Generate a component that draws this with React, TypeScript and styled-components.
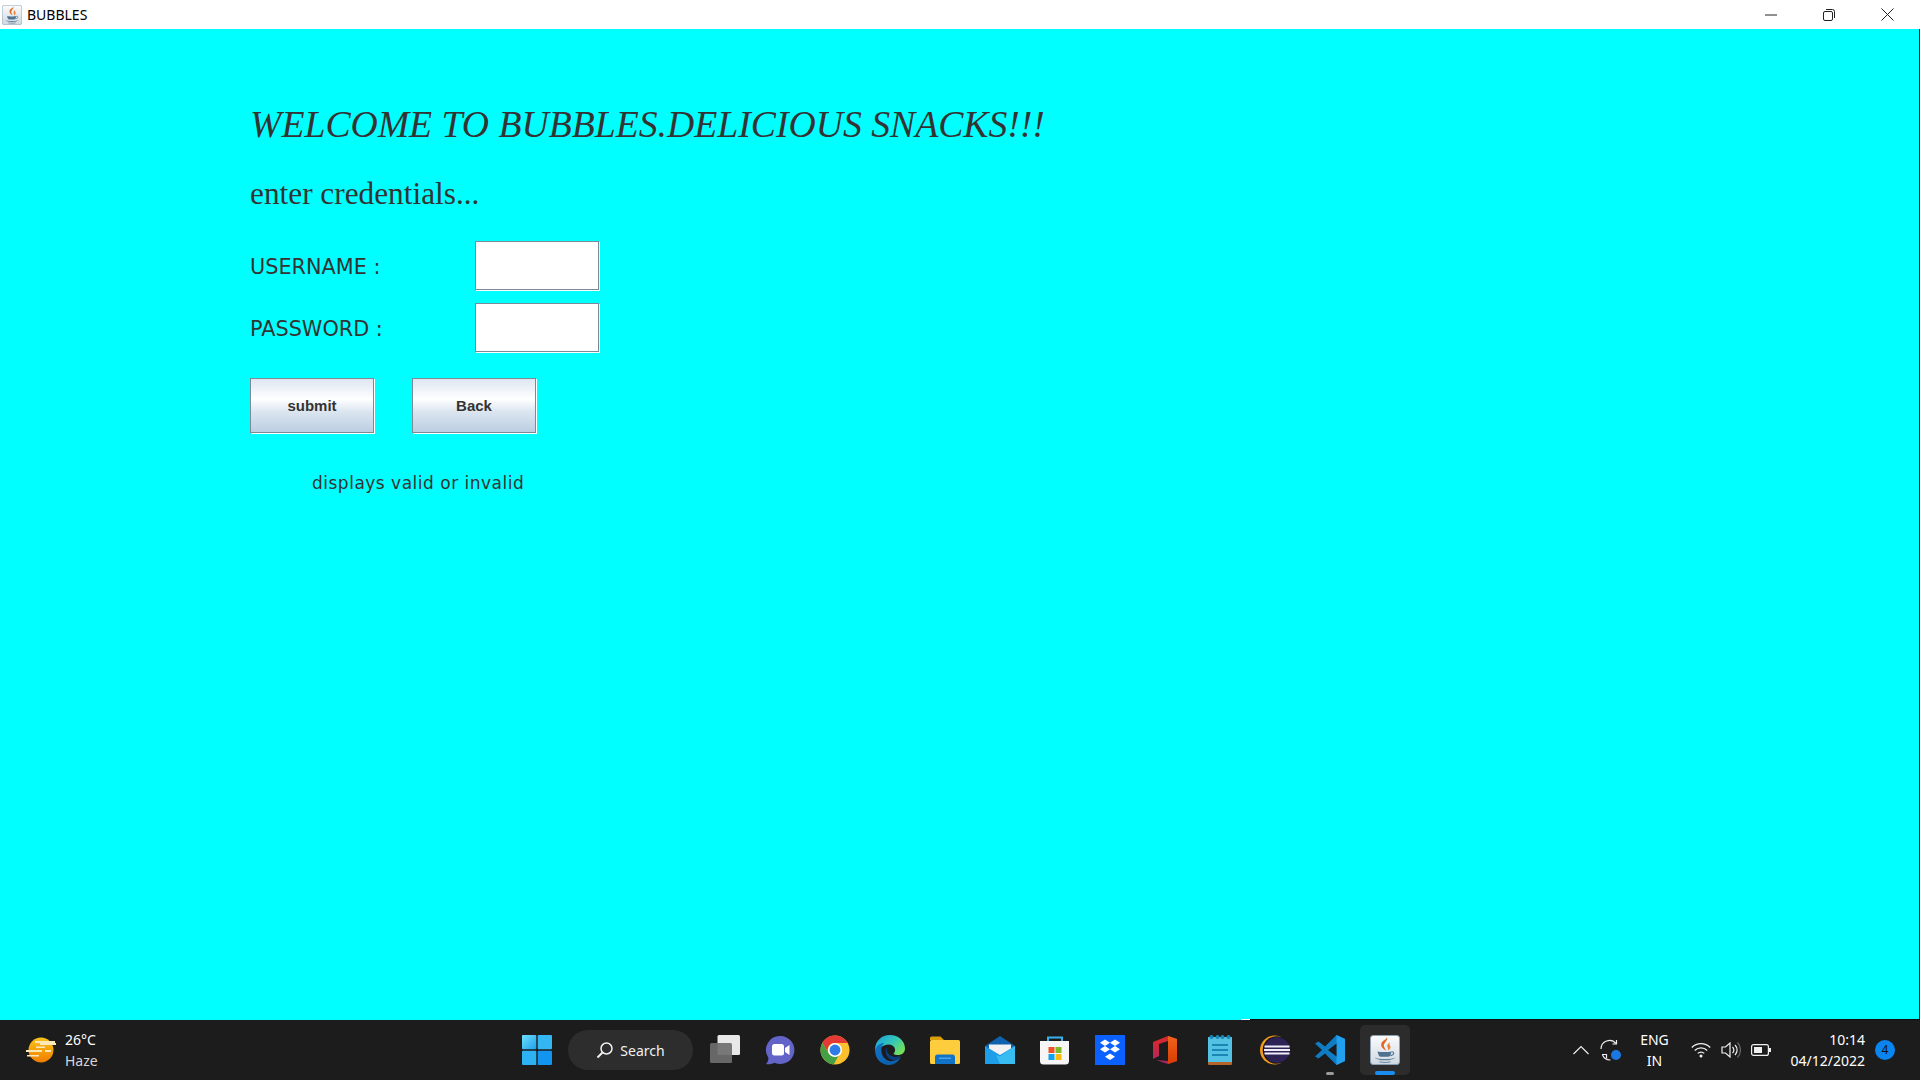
import React from 'react';
import styled, { createGlobalStyle } from 'styled-components';

const GlobalStyle = createGlobalStyle`
  html, body { margin: 0; padding: 0; height: 100%; background: #00ffff; overflow: hidden; }
  #root { height: 100%; }
`;

const Screen = styled.div`
  width: 1920px;
  height: 1080px;
  display: flex;
  flex-direction: column;
`;

const TitleBar = styled.header`
  height: 29px;
  flex: none;
  background: #fff;
  display: flex;
  align-items: center;
  padding-left: 2px;
`;

const TitleText = styled.span`
  margin-left: 5px;
  font: 14px 'Noto Sans', sans-serif;
  color: #000;
`;

const WindowButtons = styled.div`
  margin-left: auto;
  padding-right: 3px;
  display: flex;
`;

const WindowButton = styled.div`
  width: 58.5px;
  height: 29px;
  display: flex;
  align-items: center;
  justify-content: center;
`;

const Content = styled.main`
  flex: 1;
  background: #00ffff;
  border-right: 1px solid #222;
  padding: 73px 0 0 250px;
  color: #333;
`;

const Heading = styled.h1`
  margin: 0;
  height: 44px;
  font: italic 400 37.7px/44px 'Liberation Serif', serif;
  white-space: nowrap;
`;

const SubHeading = styled.h2`
  margin: 30px 0 0;
  height: 36px;
  font: 400 31.3px/36px 'Liberation Serif', serif;
`;

const FormGrid = styled.div`
  margin-top: 29px;
  display: grid;
  grid-template-columns: 225px 124px;
  grid-auto-rows: 49px;
  row-gap: 13px;
  align-items: center;
`;

const FieldLabel = styled.label`
  font: 20.8px/24px 'DejaVu Sans', sans-serif;
  padding-top: 3px;
`;

const TextField = styled.input`
  box-sizing: border-box;
  width: 124px;
  height: 49px;
  background: #fff;
  border: 1px solid #7a8a99;
  box-shadow: 1px 1px 0 #fff;
  padding: 0;
  outline: none;
`;

const ButtonRow = styled.div`
  margin-top: 26px;
  display: flex;
  gap: 38px;
`;

const MetalButton = styled.button`
  box-sizing: border-box;
  width: 124px;
  height: 55px;
  border: 1px solid #7a8a99;
  box-shadow: 1px 1px 0 #fff;
  background: linear-gradient(180deg, #dde6f1 0%, #ffffff 38%, #dbe5f0 62%, #bccee2 100%);
  font: 700 15px 'Liberation Sans', sans-serif;
  color: #333;
  padding: 0;
`;

const StatusText = styled.div`
  margin: 39px 0 0 62px;
  font: 17px/22px 'DejaVu Sans', sans-serif;
  letter-spacing: 0.5px;
`;

const Taskbar = styled.footer`
  position: relative;
  height: 60px;
  flex: none;
  background: #1c1c1c;
  display: flex;
  align-items: center;
  color: #fff;
  font: 14px/21px 'Noto Sans', sans-serif;
`;

const EdgeLine = styled.div<{ $left: number; $width: number; $color: string }>`
  position: absolute;
  top: -1px;
  height: 1px;
  left: ${(p) => p.$left}px;
  width: ${(p) => p.$width}px;
  background: ${(p) => p.$color};
`;

const Weather = styled.div`
  width: 486px;
  flex: none;
  padding-left: 26px;
  display: flex;
  align-items: center;
  gap: 9px;
`;

const WeatherText = styled.div`
  display: flex;
  flex-direction: column;
  margin-top: -1px;
`;

const Muted = styled.span`
  color: #d6d6d6;
`;

const Dock = styled.div`
  display: flex;
  align-items: center;
  gap: 5px;
`;

const DockSlot = styled.div<{ $active?: boolean }>`
  position: relative;
  width: 50px;
  height: 50px;
  border-radius: 5px;
  display: flex;
  align-items: center;
  justify-content: center;
  background: ${(p) => (p.$active ? '#2c2c2c' : 'transparent')};
`;

const RunningDot = styled.div<{ $active?: boolean }>`
  position: absolute;
  bottom: 0;
  left: 50%;
  transform: translateX(-50%);
  width: ${(p) => (p.$active ? 20 : 8)}px;
  height: ${(p) => (p.$active ? 4 : 3)}px;
  border-radius: 2px;
  background: ${(p) => (p.$active ? '#1a8cf0' : '#9a9a9a')};
`;

const SearchPill = styled.div`
  width: 125px;
  height: 40px;
  margin: 0 2px 0 1px;
  border-radius: 20px;
  background: #2d2d2d;
  display: flex;
  align-items: center;
  justify-content: center;
  gap: 6px;
  font-size: 14px;
  color: #f0f0f0;
`;

const Tray = styled.div`
  margin-left: auto;
  padding-right: 25px;
  display: flex;
  align-items: center;
`;

const TraySlot = styled.div<{ $width: number }>`
  width: ${(p) => p.$width}px;
  display: flex;
  align-items: center;
  justify-content: center;
`;

const LangBlock = styled.div`
  text-align: center;
`;

const ClockBlock = styled.div`
  width: 86px;
  text-align: right;
  white-space: nowrap;
  margin-right: 10px;
`;

const Badge = styled.div`
  width: 20px;
  height: 20px;
  border-radius: 50%;
  background: #0a84ee;
  color: #111;
  font-size: 12px;
  line-height: 20px;
  text-align: center;
`;

const JavaIcon = ({ size }: { size: number }) => (
  <svg width={size} height={size} viewBox="0 0 32 32">
    <defs>
      <linearGradient id="javaBg" x1="0" y1="0" x2="0" y2="1">
        <stop offset="0" stopColor="#fbfcfd" />
        <stop offset="1" stopColor="#cfd8e2" />
      </linearGradient>
    </defs>
    <rect x="0.5" y="0.5" width="31" height="31" rx="3" fill="url(#javaBg)" stroke="#8ea2b5" />
    <path d="M18 2.500c2 3.500-4.500 6-3 10 .4 1.200 1.300 2.500 2 4-3-1.500-5.500-4-5-7C12.500 6 17.500 5.500 18 2.500z" fill="#e2691f" />
    <path d="M22 7.500c-3 1.500-4.500 3.500-3 6 .4 1 .6 2 .2 3.200 2.800-1.700 3.500-3.700 2-5.700-.8-1.200-.6-2.400.8-3.500z" fill="#e98436" />
    <path d="M8 17.500c3 1 12 1 15 0-.5 1.200-.8 3.500-1.600 4.500-1 1.200-2.400 1.200-5.900 1.200s-5 0-5.900-1.200C8.800 21 8.500 18.700 8 17.500z" fill="#4f7290" />
    <path d="M23 18c3-.6 3.500 3-1.200 4" fill="none" stroke="#4f7290" strokeWidth="1.200" />
    <path d="M5 24c4 2.200 18 2.200 22 0-3 4-19 4-22 0z" fill="#5f7f99" />
    <path d="M10 28.500c3 .8 9 .8 12 0" fill="none" stroke="#6d8aa2" strokeWidth="1.200" />
  </svg>
);

const SunHaze = () => (
  <svg width="30" height="28" viewBox="0 0 30 28">
    <defs>
      <linearGradient id="sun" x1="0" y1="0" x2="0" y2="1">
        <stop offset="0" stopColor="#fcc419" />
        <stop offset="1" stopColor="#ef7d00" />
      </linearGradient>
    </defs>
    <circle cx="15" cy="14" r="12.500" fill="url(#sun)" />
    <g fill="#fbe7b8">
      <rect x="9" y="5" width="20" height="2" />
      <rect x="14" y="7" width="16" height="2" />
      <rect x="10" y="10.500" width="9" height="1.500" />
      <rect x="0" y="14" width="16" height="2" />
      <rect x="19" y="14" width="6" height="2" />
      <rect x="1" y="19" width="12" height="1.500" />
    </g>
  </svg>
);

const WindowsLogo = () => (
  <svg width="30" height="30" viewBox="0 0 30 30">
    <defs>
      <linearGradient id="winA" x1="0" y1="0" x2="1" y2="1">
        <stop offset="0" stopColor="#6fe0fb" />
        <stop offset="1" stopColor="#1c9fee" />
      </linearGradient>
    </defs>
    <rect x="0" y="0" width="14.300" height="14.300" rx="1" fill="url(#winA)" />
    <rect x="15.700" y="0" width="14.300" height="14.300" rx="1" fill="#34b6f3" />
    <rect x="0" y="15.700" width="14.300" height="14.300" rx="1" fill="#2cb1f2" />
    <rect x="15.700" y="15.700" width="14.300" height="14.300" rx="1" fill="#1195f0" />
  </svg>
);

const SearchGlyph = () => (
  <svg width="18" height="18" viewBox="0 0 18 18" fill="none" stroke="#f0f0f0" strokeWidth="1.500">
    <circle cx="10.500" cy="7.500" r="5.500" />
    <path d="M6.500 11.500L1.500 16.500" strokeWidth="2" />
  </svg>
);

const TaskView = () => (
  <svg width="30" height="30" viewBox="0 0 30 30">
    <rect x="7.500" y="0" width="22.500" height="20" rx="1.500" fill="#e8e8e8" />
    <rect x="0" y="8" width="22" height="20" rx="1.500" fill="#6e6e6e" fillOpacity="0.92" />
  </svg>
);

const ChatIcon = () => (
  <svg width="30" height="30" viewBox="0 0 30 30">
    <path d="M15.500 1a14 14 0 1 1-6 26.700C7 29 3.500 29.500 1 29c1.500-1.500 2.300-3.500 2.500-6A14 14 0 0 1 15.500 1z" fill="#6264c8" />
    <rect x="7" y="9" width="12" height="11.500" rx="2.500" fill="#fff" />
    <path d="M20 13l4.500-3v10L20 17z" fill="#fff" />
  </svg>
);

const ChromeIcon = () => (
  <svg width="30" height="30" viewBox="0 0 32 32">
    <circle cx="16" cy="16" r="15.500" fill="#fbc02d" />
    <path d="M16 .5A15.500 15.500 0 0 0 2.600 8.200L9.200 19.800A7.500 7.500 0 0 1 16 8.500h13.400A15.500 15.500 0 0 0 16 .5z" fill="#e53935" />
    <path d="M2.600 8.200A15.500 15.500 0 0 0 14.500 31.400l6.700-11.600a7.500 7.500 0 0 1-12-0z" fill="#43a047" />
    <circle cx="16" cy="16" r="7.500" fill="#fff" />
    <circle cx="16" cy="16" r="5.800" fill="#2f7be8" />
  </svg>
);

const EdgeIcon = () => (
  <svg width="30" height="30" viewBox="0 0 30 30">
    <defs>
      <linearGradient id="edgeTop" x1="0" y1="0" x2="1" y2="0.700">
        <stop offset="0" stopColor="#1b9de2" />
        <stop offset="0.550" stopColor="#33c6b8" />
        <stop offset="1" stopColor="#76e05a" />
      </linearGradient>
      <linearGradient id="edgeLow" x1="0" y1="0" x2="1" y2="1">
        <stop offset="0" stopColor="#1175c8" />
        <stop offset="1" stopColor="#0c59a4" />
      </linearGradient>
    </defs>
    <path d="M0 15C0 6 6.500 0 15 0c8.500 0 15 6 15 13.500 0 4.500-3.500 6.500-7 6.500-2 0-4-.5-4.500-1.500 3-2 2-9-5-9C8 9.500 5 14 0 15z" fill="url(#edgeTop)" />
    <path d="M0 15c2-5.500 6-7 9.500-7-3 2-3.500 5.500-3 9 .8 6 6.500 10 11 9 3.500-.8 7-2.500 8.500-5-2 6-7 9-12 9C6 30 0 23.500 0 15z" fill="url(#edgeLow)" />
    <path d="M12 12c-2.500 3-1.500 9 3 12 3.500 2 8 1.500 10.500-3.500-2.500 1.500-6 2-9 .5-3.500-1.500-5.500-5-4.500-9z" fill="#0a3f86" />
  </svg>
);

const FolderIcon = () => (
  <svg width="30" height="28" viewBox="0 0 30 28">
    <path d="M0 2a1.500 1.500 0 0 1 1.500-1.500h9L14 4h-14z" fill="#d9a106" />
    <rect x="0" y="4" width="30" height="24" rx="1.500" fill="#fecd3d" />
    <path d="M5 28v-7a2.500 2.500 0 0 1 2.500-2.500h15A2.500 2.500 0 0 1 25 21v7z" fill="#1173c7" />
    <rect x="9" y="21.500" width="12" height="1.500" fill="#49a4e8" />
  </svg>
);

const MailIcon = () => (
  <svg width="30" height="28" viewBox="0 0 30 28">
    <path d="M0 10L15 0l15 10v2H0z" fill="#0f62ad" />
    <path d="M4 8.500h22V15l-11 6L4 15z" fill="#f2f2f2" />
    <path d="M0 10l15 9 15-9v18H0z" fill="#1e9ee8" />
    <path d="M30 10v18H15l-4-9 4 1.500z" fill="#38bdf2" />
  </svg>
);

const StoreIcon = () => (
  <svg width="30" height="30" viewBox="0 0 30 30">
    <path d="M8 7V2.500h14V7" fill="none" stroke="#35b3ea" strokeWidth="2" />
    <path d="M0 6h29v20a3.500 3.500 0 0 1-3.500 3.500h-22A3.500 3.500 0 0 1 0 26z" fill="#f6f6f6" />
    <rect x="8.500" y="12" width="6" height="6" fill="#f05323" />
    <rect x="15.500" y="12" width="6" height="6" fill="#7cb927" />
    <rect x="8.500" y="19" width="6" height="6" fill="#0ea2ef" />
    <rect x="15.500" y="19" width="6" height="6" fill="#fdb90d" />
  </svg>
);

const DropboxIcon = () => (
  <svg width="30" height="30" viewBox="0 0 30 30">
    <rect width="30" height="30" fill="#0b61fe" />
    <g fill="#fff">
      <path d="M10 4.500l5 3.200-5 3.200-5-3.200z" />
      <path d="M20 4.500l5 3.200-5 3.200-5-3.200z" />
      <path d="M10 11l5 3.200-5 3.200-5-3.200z" />
      <path d="M20 11l5 3.200-5 3.200-5-3.200z" />
      <path d="M15 18.500l5 3.200-5 3.200-5-3.200z" />
    </g>
  </svg>
);

const OfficeIcon = () => (
  <svg width="24" height="28" viewBox="0 0 24 28">
    <defs>
      <linearGradient id="officeA" x1="0" y1="0" x2="0.300" y2="1">
        <stop offset="0" stopColor="#e02a20" />
        <stop offset="1" stopColor="#a9256a" />
      </linearGradient>
      <linearGradient id="officeB" x1="0" y1="0" x2="0" y2="1">
        <stop offset="0" stopColor="#f0641e" />
        <stop offset="1" stopColor="#d83b01" />
      </linearGradient>
    </defs>
    <path d="M0 6L15 0l9 3v22l-9 3-12-4 12 1V5L6 8v12l-6 3z" fill="url(#officeA)" />
    <path d="M15 0l9 3v22l-9 3z" fill="url(#officeB)" />
  </svg>
);

const NotepadIcon = () => (
  <svg width="24" height="30" viewBox="0 0 24 30">
    <rect x="0" y="2" width="24" height="26" fill="#53c1e4" />
    <rect x="0" y="27" width="24" height="3" rx="1" fill="#b5642a" />
    <g fill="#1b86b4">
      <circle cx="3.500" cy="2" r="2" />
      <circle cx="9.500" cy="2" r="2" />
      <circle cx="14.500" cy="2" r="2" />
      <circle cx="20.500" cy="2" r="2" />
      <rect x="4" y="9" width="16" height="2" />
      <rect x="4" y="14" width="16" height="2" />
      <rect x="4" y="19" width="16" height="2" />
    </g>
  </svg>
);

const EclipseIcon = () => (
  <svg width="30" height="30" viewBox="0 0 30 30">
    <circle cx="14.500" cy="15" r="14.500" fill="#f09a1e" />
    <circle cx="16.500" cy="15" r="13.800" fill="#111" />
    <circle cx="17" cy="15" r="13" fill="#2c2255" />
    <g fill="#f0eef8">
      <rect x="4.500" y="10.500" width="25" height="2" />
      <rect x="4" y="14" width="26" height="2" />
      <rect x="4.500" y="17.500" width="25" height="2" />
    </g>
  </svg>
);

const VsCodeIcon = () => (
  <svg width="30" height="30" viewBox="0 0 30 30">
    <path d="M21.500 0L30 4v22l-8.500 4L10 18.500 3.500 23.500 0 21.500 7 15 0 8.500 3.500 6.500 10 11.500z" fill="#0f7cc4" />
    <path d="M21.500 0L30 4v22l-8.500 4z" fill="#20a0ee" />
    <path d="M21.500 8.500L13 15l8.500 6.500z" fill="#1c1c1c" />
  </svg>
);

const Chevron = () => (
  <svg width="16" height="10" viewBox="0 0 16 10" fill="none" stroke="#eee" strokeWidth="1.200">
    <path d="M.5 9L8 1.500 15.500 9" />
  </svg>
);

const SyncDot = () => (
  <svg width="22" height="22" viewBox="0 0 22 22" fill="none" stroke="#eee" strokeWidth="1.200">
    <path d="M1 10a8.500 8.500 0 0 1 15-5.500" />
    <path d="M16.500 1v4h-4" />
    <path d="M2 15.500h4.500v4" />
    <path d="M2.500 16a8.500 8.500 0 0 0 8 5" />
    <circle cx="16" cy="16" r="5" fill="#1a78e0" stroke="none" />
  </svg>
);

const Wifi = () => (
  <svg width="20" height="16" viewBox="0 0 20 16" fill="none" stroke="#f0f0f0" strokeWidth="1.300">
    <path d="M.8 5.500a13 13 0 0 1 18.400 0" />
    <path d="M3.800 8.500a8.800 8.800 0 0 1 12.400 0" />
    <path d="M6.800 11.400a4.500 4.500 0 0 1 6.400 0" />
    <circle cx="10" cy="14" r="1.500" fill="#f0f0f0" stroke="none" />
  </svg>
);

const Speaker = () => (
  <svg width="20" height="18" viewBox="0 0 20 18" fill="none" stroke="#f0f0f0" strokeWidth="1.200">
    <path d="M1 6h3.500L9 2v14l-4.500-4H1z" />
    <path d="M11.500 6a4 4 0 0 1 0 6" />
    <path d="M14 4a7 7 0 0 1 0 10" />
    <path d="M16.500 1.500a11 11 0 0 1 0 15" stroke="#666" />
  </svg>
);

const Battery = () => (
  <svg width="20" height="12" viewBox="0 0 20 12" fill="none">
    <rect x=".6" y=".6" width="16.800" height="10.800" rx="2" stroke="#f0f0f0" strokeWidth="1.200" />
    <rect x="3" y="3" width="8" height="6" fill="#f0f0f0" />
    <rect x="18" y="4" width="2" height="4" fill="#f0f0f0" />
  </svg>
);

const Minimize = () => (
  <svg width="12" height="12" viewBox="0 0 12 12">
    <path d="M0 6h12" stroke="#222" strokeWidth="1" />
  </svg>
);

const Restore = () => (
  <svg width="12" height="12" viewBox="0 0 12 12" fill="none" stroke="#222" strokeWidth="1">
    <rect x=".5" y="2.500" width="9" height="9" rx="1.500" />
    <path d="M3 .5h6.500a2 2 0 0 1 2 2V9" />
  </svg>
);

const CloseGlyph = () => (
  <svg width="13" height="13" viewBox="0 0 13 13">
    <path d="M.5.500l12 12M12.500.500l-12 12" stroke="#222" strokeWidth="1" />
  </svg>
);

const App = (): JSX.Element => (
  <Screen>
    <GlobalStyle />
    <TitleBar>
      <JavaIcon size={20} />
      <TitleText>BUBBLES</TitleText>
      <WindowButtons>
        <WindowButton><Minimize /></WindowButton>
        <WindowButton><Restore /></WindowButton>
        <WindowButton><CloseGlyph /></WindowButton>
      </WindowButtons>
    </TitleBar>

    <Content>
      <Heading>WELCOME TO BUBBLES.DELICIOUS SNACKS!!!</Heading>
      <SubHeading>enter credentials...</SubHeading>
      <FormGrid>
        <FieldLabel>USERNAME :</FieldLabel>
        <TextField />
        <FieldLabel>PASSWORD :</FieldLabel>
        <TextField type="password" />
      </FormGrid>
      <ButtonRow>
        <MetalButton>submit</MetalButton>
        <MetalButton>Back</MetalButton>
      </ButtonRow>
      <StatusText>displays valid or invalid</StatusText>
    </Content>

    <Taskbar>
      <EdgeLine $left={1241} $width={9} $color="#fff" />
      <EdgeLine $left={1250} $width={670} $color="#111" />
      <Weather>
        <SunHaze />
        <WeatherText>
          <span>26°C</span>
          <Muted>Haze</Muted>
        </WeatherText>
      </Weather>
      <Dock>
        <DockSlot><WindowsLogo /></DockSlot>
        <SearchPill><SearchGlyph />Search</SearchPill>
        <DockSlot><TaskView /></DockSlot>
        <DockSlot><ChatIcon /></DockSlot>
        <DockSlot><ChromeIcon /></DockSlot>
        <DockSlot><EdgeIcon /></DockSlot>
        <DockSlot><FolderIcon /></DockSlot>
        <DockSlot><MailIcon /></DockSlot>
        <DockSlot><StoreIcon /></DockSlot>
        <DockSlot><DropboxIcon /></DockSlot>
        <DockSlot><OfficeIcon /></DockSlot>
        <DockSlot><NotepadIcon /></DockSlot>
        <DockSlot><EclipseIcon /></DockSlot>
        <DockSlot><VsCodeIcon /><RunningDot /></DockSlot>
        <DockSlot $active><JavaIcon size={30} /><RunningDot $active /></DockSlot>
      </Dock>
      <Tray>
        <TraySlot $width={30}><Chevron /></TraySlot>
        <TraySlot $width={30}><SyncDot /></TraySlot>
        <TraySlot $width={57}><LangBlock>ENG<br />IN</LangBlock></TraySlot>
        <TraySlot $width={36}><Wifi /></TraySlot>
        <TraySlot $width={24}><Speaker /></TraySlot>
        <TraySlot $width={36}><Battery /></TraySlot>
        <ClockBlock>10:14<br />04/12/2022</ClockBlock>
        <Badge>4</Badge>
      </Tray>
    </Taskbar>
  </Screen>
);

export default App;
